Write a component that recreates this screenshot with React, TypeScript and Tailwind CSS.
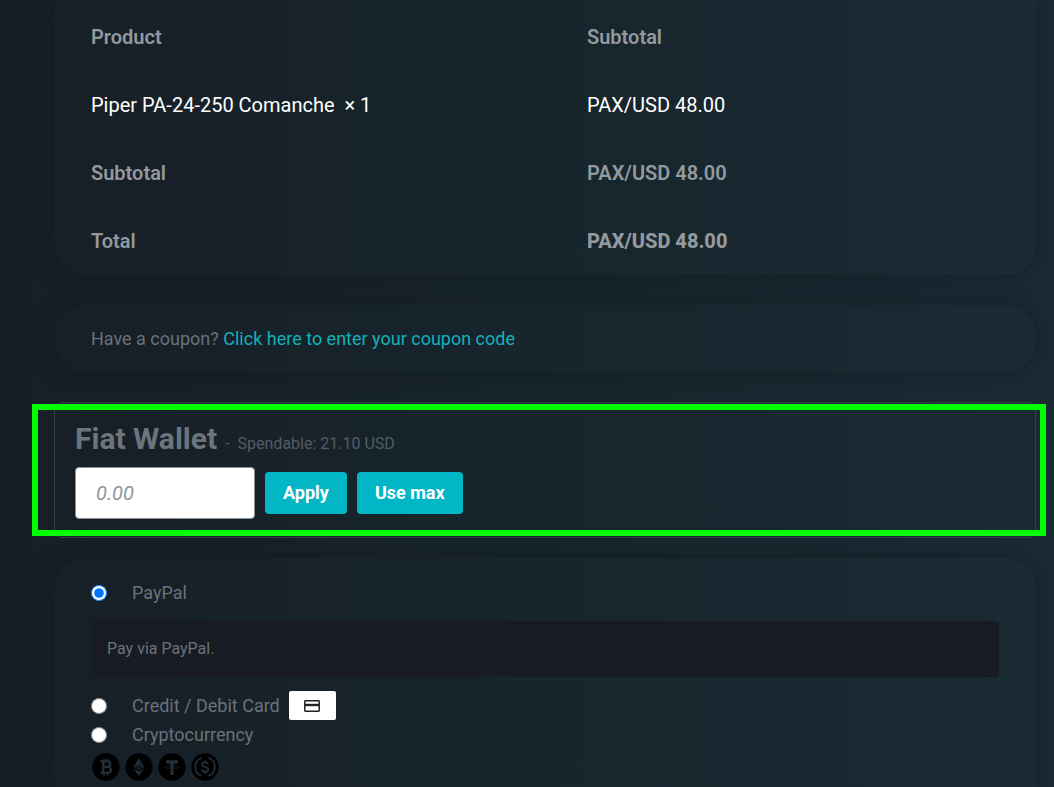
import { useState } from "react";
import type { ReactNode } from "react";

const orderRows = [
  {
    label: "Piper PA-24-250 Comanche \u00a0× 1",
    value: "PAX/USD 48.00",
    labelStyle: "text-white font-normal",
    valueStyle: "text-white font-normal",
  },
  {
    label: "Subtotal",
    value: "PAX/USD 48.00",
    labelStyle: "text-[#93999e] font-semibold",
    valueStyle: "text-[#93999e] font-semibold",
  },
  {
    label: "Total",
    value: "PAX/USD 48.00",
    labelStyle: "text-[#93999e] font-semibold",
    valueStyle: "text-[#93999e] font-extrabold",
  },
];

const OrderSummary = () => {
  return (
    <section className="rounded-b-[30px] px-[37px] pt-[3px] shadow-[0_0_20px_rgba(16,22,30,0.6)]">
      <table className="w-full table-fixed text-left text-xl">
        <thead>
          <tr className="h-[68px] text-[#93999e]">
            <th className="w-[496px] font-semibold">Product</th>
            <th className="font-semibold">Subtotal</th>
          </tr>
        </thead>
        <tbody>
          {orderRows.map((row) => (
            <tr key={row.label} className="h-[68px]">
              <th scope="row" className={row.labelStyle}>
                {row.label}
              </th>
              <td className={row.valueStyle}>{row.value}</td>
            </tr>
          ))}
        </tbody>
      </table>
    </section>
  );
};

const Coupon = () => {
  return (
    <section className="mt-[30px] rounded-[30px] px-[37px] py-5 text-lg leading-[27px] text-[#69727a] shadow-[0_0_20px_rgba(16,22,30,0.6)]">
      Have a coupon?{" "}
      <a href="#coupon" className="text-[#12b0b9]">
        Click here to enter your coupon code
      </a>
    </section>
  );
};

const FiatWallet = () => {
  return (
    <section className="relative mt-[30px] rounded-lg border border-[#343f47] px-5 pt-[15px] pb-[18px]">
      <div className="flex items-baseline gap-2 leading-[42px] text-[#535c64]">
        <h3 className="text-3xl leading-[42px] font-bold text-[#6c757d]">
          Fiat Wallet
        </h3>
        <span>-</span>
        <span>Spendable: 21.10 USD</span>
      </div>
      <form
        className="mt-[2px] flex items-center gap-[10px]"
        onSubmit={(e) => e.preventDefault()}
      >
        <input
          type="text"
          aria-label="Amount"
          placeholder="0.00"
          className="h-[52px] w-[180px] rounded-sm border border-[#8b9197] bg-white px-5 text-xl text-gray-800 placeholder:text-[#8e979f] placeholder:italic"
        />
        <button
          type="submit"
          className="h-[42px] rounded bg-[#02b6c6] px-[18px] text-lg font-bold text-white"
        >
          Apply
        </button>
        <button
          type="button"
          className="h-[42px] rounded bg-[#02b6c6] px-[18px] text-lg font-bold text-white"
        >
          Use max
        </button>
      </form>
      {/* Highlight frame */}
      <div className="pointer-events-none absolute top-px -right-[11px] bottom-px -left-[23px] border-6 border-[#00ff00]" />
    </section>
  );
};

const Coin = ({ name, children }: { name: string; children: ReactNode }) => {
  return (
    <svg
      viewBox="0 0 28 28"
      className="size-7"
      role="img"
      aria-label={name}
      fill="none"
      stroke="#232e36"
    >
      <circle cx="14" cy="14" r="13.7" fill="#000" stroke="none" />
      {children}
    </svg>
  );
};

const Coins = () => {
  return (
    <div className="flex gap-[5px] pl-px">
      <Coin name="Bitcoin">
        <path
          strokeWidth="2.4"
          d="M8.5 8.3H15.4a2.7 2.7 0 0 1 0 5.6H11M15.4 13.9H16a3 3 0 0 1 0 6H8.5M11.2 8.3V20"
        />
        <path strokeWidth="1.7" d="M12 5.5V8M15.4 5.5V8M12 20v2.7M15.4 20v2.7" />
      </Coin>
      <Coin name="Ethereum">
        <g stroke="none">
          <path fill="#26323a" d="M14 5 8.6 14 14 17.2Z" />
          <path fill="#1b252c" d="M14 5 19.4 14 14 17.2Z" />
          <path fill="#10171c" d="M14 11.5 8.6 14 14 17.2 19.4 14Z" />
          <path fill="#26323a" d="M8.6 15.4 14 23V18.6Z" />
          <path fill="#1b252c" d="M19.4 15.4 14 23V18.6Z" />
        </g>
      </Coin>
      <Coin name="Tether">
        <path strokeWidth="3.2" d="M8 8.8H20M14 8.8V22" />
        <ellipse cx="14" cy="14" rx="7.5" ry="1.3" strokeWidth="0.5" />
      </Coin>
      <Coin name="USD Coin">
        <path
          strokeWidth="1.8"
          d="M10.5 5a9.6 9.6 0 0 0 0 18M17.5 5a9.6 9.6 0 0 1 0 18"
        />
        <path
          strokeWidth="1.8"
          d="M17 11.4c-.2-1.5-1.4-2.1-3-2.1-1.8 0-3 .8-3 2.2 0 3.3 6.2 1.6 6.2 5 0 1.4-1.2 2.2-3.2 2.2-1.8 0-3.1-.7-3.2-2.3M14 7.2V9.3M14 18.7v2.1"
        />
      </Coin>
    </div>
  );
};

const CardIcon = () => {
  return (
    <span className="ml-[9px] flex h-[29px] w-[47px] items-center justify-center rounded-xs bg-white">
      <svg viewBox="0 0 16 12" className="h-3 w-4" fill="none" stroke="#222">
        <rect x="0.8" y="0.8" width="14.4" height="10.4" rx="0.6" strokeWidth="1.5" />
        <path d="M1 5H15" strokeWidth="2.4" />
      </svg>
    </span>
  );
};

const PaymentMethods = () => {
  const [method, setMethod] = useState("paypal");

  const radio = (value: string) => (
    <input
      type="radio"
      name="payment"
      id={value}
      checked={method === value}
      onChange={() => setMethod(value)}
      className="size-4 shrink-0"
    />
  );

  return (
    <section className="mt-5 flex-1 rounded-t-[30px] px-[37px] pt-5 text-lg text-[#69727a] shadow-[0_0_20px_rgba(16,22,30,0.6)]">
      <div className="flex h-[29px] items-center">
        {radio("paypal")}
        <label htmlFor="paypal" className="pl-[25px]">
          PayPal
        </label>
      </div>
      <p className="mt-[14px] mb-[14px] rounded-xs bg-[#181b23] p-4 text-base">
        Pay via PayPal.
      </p>
      <div className="flex h-[29px] items-center">
        {radio("card")}
        <label htmlFor="card" className="flex items-center pl-[25px]">
          Credit / Debit Card
          <CardIcon />
        </label>
      </div>
      <div className="flex h-[29px] items-center">
        {radio("crypto")}
        <label htmlFor="crypto" className="pl-[25px]">
          Cryptocurrency
        </label>
      </div>
      <div className="mt-1 pb-1">
        <Coins />
      </div>
    </section>
  );
};

const App = () => {
  return (
    <main className="flex min-h-screen flex-col overflow-hidden bg-linear-to-r from-[#171e26] via-[#17252c] to-[#1a2b34] pr-[18px] pl-[54px] font-[Roboto,sans-serif]">
      <OrderSummary />
      <Coupon />
      <FiatWallet />
      <PaymentMethods />
    </main>
  );
};

export default App;
